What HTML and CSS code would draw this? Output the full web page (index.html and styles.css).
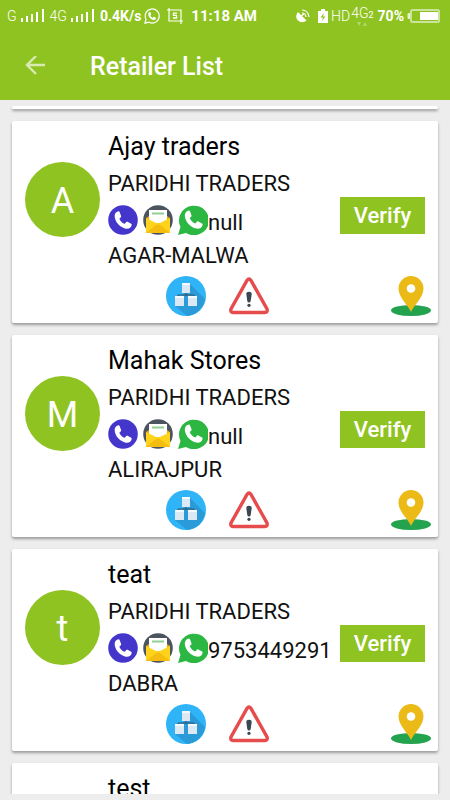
FILE: index.html
```html
<!DOCTYPE html>
<html lang="en">
<head>
  <meta charset="UTF-8">
  <meta name="viewport" content="width=device-width, initial-scale=1.0">
  <title>Retailer List</title>
  <link rel="stylesheet" href="styles.css">
</head>
<body>
  <!-- shared icons -->
  <svg class="sprite" aria-hidden="true">
    <symbol id="signal" viewBox="0 0 24 16">
      <path d="M0 10h2v4H0zM5 8h2v6H5zM10 6h2v8h-2zM15 4h2v10h-2zM21 1h2v13h-2z" fill="#fff"/>
    </symbol>
    <symbol id="handset" viewBox="0 0 24 24">
      <path d="M7 2.500c-3 .8-4.500 3-4 6.500C4 15 9 20 15 21.500c3.500.5 6-1 6.500-4 .1-.6-.1-1-.6-1.300L17 14c-.6-.3-1.100-.1-1.500.3L14 16.200C11.500 15.500 9 13 8 10.500L9.600 9c.4-.4.5-.9.3-1.400L8.300 3.300C8.100 2.700 7.600 2.400 7 2.500z"/>
    </symbol>
    <symbol id="call" viewBox="0 0 30 30">
      <circle cx="15" cy="15" r="14.800" fill="#4536cb"/>
      <use href="#handset" x="4" y="4" width="22" height="22" fill="#fff"/>
    </symbol>
    <symbol id="mail" viewBox="0 0 30 30">
      <circle cx="15" cy="15" r="14.800" fill="#4b545f"/>
      <path d="M3 13l3-2h18l3 2v8H3z" fill="#e8ac09"/>
      <path d="M6 5h18v15H6z" fill="#fff"/>
      <path d="M9 8.500h12" stroke="#8fcf91" stroke-width="2"/>
      <path d="M3 13l10 5h4l10-5v15H3z" fill="#fdd31b"/>
      <path d="M3 28l10-8q2-1 4 0l10 8z" fill="#f5bd10"/>
    </symbol>
    <symbol id="whatsapp" viewBox="0 0 30 30">
      <path d="M0 30 2.500 22A15 14.800 0 1 1 8 28z" fill="#2cb742"/>
      <use href="#handset" x="4" y="3" width="23" height="23" fill="#fff"/>
    </symbol>
    <symbol id="stock" viewBox="0 0 40 40">
      <circle cx="20" cy="20" r="20" fill="#2fb4f8"/>
      <path d="M24 8 39 23a20 20 0 0 1-18 17L9 30z" fill="#2a9bd8"/>
      <path d="M20 17v3M12 21v-2h16v2" fill="none" stroke="#345467" stroke-width="1"/>
      <path d="M16 7h8v10h-8zM9 20h9v10H9zM22 20h9v10h-9z" fill="#dce9f4"/>
      <path d="M16 7h8v2h-8zM9 20h9v2H9zM22 20h9v2h-9z" fill="#f7fafc"/>
    </symbol>
    <symbol id="warning" viewBox="0 0 40 40">
      <path d="M18 4.500q2-3 4 0l16 28.500q1 3.200-2.200 3.500H4.200Q1 36.200 2 33z" fill="#fff" stroke="#e64c4c" stroke-width="3.400"/>
      <path d="M17.300 18q0-2.200 2.700-2.200t2.700 2.200l-1 7q-.3 1.500-1.700 1.500T18.300 25z" fill="#394750"/>
      <circle cx="20" cy="29.300" r="1.600" fill="#394750"/>
    </symbol>
    <symbol id="pin" viewBox="0 0 40 40">
      <ellipse cx="20" cy="34.500" rx="20" ry="5.500" fill="#24a34f"/>
      <path d="M20 36C18 30 7.500 22 7.500 12.500a12.500 12.500 0 0 1 25 0C32.500 22 22 30 20 36z" fill="#ebba16"/>
      <circle cx="20" cy="12.500" r="4.300" fill="#fff"/>
    </symbol>
  </svg>

  <header class="app-bar">
    <div class="status">
      <span class="network">G</span>
      <svg class="signal"><use href="#signal"/></svg>
      <span class="network">4G</span>
      <svg class="signal"><use href="#signal"/></svg>
      <span class="speed">0.4K/s</span>
      <svg class="status-icon" viewBox="0 0 16 16">
        <path d="M1 15.200l1-4A7 7 0 1 1 5 14.200z" fill="none" stroke="#fff" stroke-width="1.200"/>
        <use href="#handset" x="3" y="3" width="10" height="10" fill="#fff"/>
      </svg>
      <svg class="status-icon capture" viewBox="0 0 16 16">
        <path d="M0 2h14v14M2 0v13h14" fill="none" stroke="#fff" stroke-width="1.200"/>
        <path d="M10 5.200H6.500v2.200h3v2.600H6" fill="none" stroke="#fff" stroke-width="1.300"/>
      </svg>
      <span class="clock">11:18 AM</span>
      <svg class="satellite" viewBox="0 0 14 14">
        <path d="M2 3l8.500 8.500A5.700 5.700 0 1 1 2 3z" fill="#fff"/>
        <path d="M5 7l3-2" stroke="#fff" stroke-width="1.500"/>
        <path d="M6 1q6 0 7 7M6 4q3.500 0 4 4" fill="none" stroke="#fff" stroke-width="1.200"/>
      </svg>
      <svg class="charge" viewBox="0 0 10 14">
        <path d="M0 2h3V0h4v2h3v12H0z" fill="#fff"/>
        <path d="M6 4 2.500 8.500H5L4 12l3.500-4.500H5z" fill="#8fc321"/>
      </svg>
      <span class="hd">HD</span>
      <span class="sim"><span>4G<b>2</b></span>
        <svg viewBox="0 0 10 4"><path d="M0 0h4L2 4zM6 4h4L8 0z" fill="#b4d76b"/></svg>
      </span>
      <span class="percent">70%</span>
      <svg class="battery" viewBox="0 0 33 14">
        <path d="M3 4H1.500q-1 0-1 1.500v3q0 1.500 1 1.500H3z" fill="#e6f2cd"/>
        <rect x="4" y="1" width="28" height="12" rx="1.500" fill="none" stroke="#cbe49a" stroke-width="2"/>
        <path d="M13 3h18v8H13z" fill="#fff"/>
      </svg>
    </div>
    <div class="toolbar">
      <button class="back" type="button" aria-label="Back">
        <svg viewBox="0 0 20 20"><path d="M20 9H2M11 0L2 9l9 9" fill="none" stroke="#d8ebb2" stroke-width="2.400"/></svg>
      </button>
      <h1>Retailer List</h1>
    </div>
  </header>

  <main class="list">
    <div class="card card-end"></div>

    <article class="card">
      <div class="info">
        <div class="avatar">A</div>
        <div class="details">
          <h2>Ajay traders</h2>
          <p class="shop">PARIDHI TRADERS</p>
          <div class="contact">
            <button type="button" aria-label="Call"><svg><use href="#call"/></svg></button>
            <button type="button" aria-label="Email"><svg><use href="#mail"/></svg></button>
            <button type="button" aria-label="WhatsApp"><svg><use href="#whatsapp"/></svg></button>
            <span>null</span>
          </div>
          <p class="city">AGAR-MALWA</p>
        </div>
        <button class="verify" type="button">Verify</button>
      </div>
      <div class="actions">
        <button type="button" aria-label="Stock"><svg><use href="#stock"/></svg></button>
        <button type="button" aria-label="Report"><svg><use href="#warning"/></svg></button>
        <button class="location" type="button" aria-label="Location"><svg><use href="#pin"/></svg></button>
      </div>
    </article>

    <article class="card">
      <div class="info">
        <div class="avatar">M</div>
        <div class="details">
          <h2>Mahak Stores</h2>
          <p class="shop">PARIDHI TRADERS</p>
          <div class="contact">
            <button type="button" aria-label="Call"><svg><use href="#call"/></svg></button>
            <button type="button" aria-label="Email"><svg><use href="#mail"/></svg></button>
            <button type="button" aria-label="WhatsApp"><svg><use href="#whatsapp"/></svg></button>
            <span>null</span>
          </div>
          <p class="city">ALIRAJPUR</p>
        </div>
        <button class="verify" type="button">Verify</button>
      </div>
      <div class="actions">
        <button type="button" aria-label="Stock"><svg><use href="#stock"/></svg></button>
        <button type="button" aria-label="Report"><svg><use href="#warning"/></svg></button>
        <button class="location" type="button" aria-label="Location"><svg><use href="#pin"/></svg></button>
      </div>
    </article>

    <article class="card">
      <div class="info">
        <div class="avatar">t</div>
        <div class="details">
          <h2>teat</h2>
          <p class="shop">PARIDHI TRADERS</p>
          <div class="contact">
            <button type="button" aria-label="Call"><svg><use href="#call"/></svg></button>
            <button type="button" aria-label="Email"><svg><use href="#mail"/></svg></button>
            <button type="button" aria-label="WhatsApp"><svg><use href="#whatsapp"/></svg></button>
            <span>9753449291</span>
          </div>
          <p class="city">DABRA</p>
        </div>
        <button class="verify" type="button">Verify</button>
      </div>
      <div class="actions">
        <button type="button" aria-label="Stock"><svg><use href="#stock"/></svg></button>
        <button type="button" aria-label="Report"><svg><use href="#warning"/></svg></button>
        <button class="location" type="button" aria-label="Location"><svg><use href="#pin"/></svg></button>
      </div>
    </article>

    <article class="card card-next">
      <h2>test</h2>
    </article>
  </main>
</body>
</html>
```
FILE: styles.css
```css
* {
  box-sizing: border-box;
}
body {
  margin: 0;
  height: 100vh;
  display: flex;
  flex-direction: column;
  background-color: #ededed;
  color: #111;
  font-family: Roboto, sans-serif;
}
h1, h2, p {
  margin: 0;
  font-weight: 400;
}
button {
  display: block;
  padding: 0;
  border: 0;
  background: none;
  font-family: inherit;
  cursor: pointer;
}
svg {
  display: block;
  flex: none;
}
.sprite {
  position: absolute;
  width: 0;
  height: 0;
}

/* header */
.app-bar {
  flex: none;
  background-color: #8fc321;
  color: #fff;
}
.status {
  display: flex;
  align-items: center;
  height: 32px;
  padding: 0 10px 0 7px;
  white-space: nowrap;
  line-height: 16px;
}
.network {
  font-size: 14px;
  font-weight: 300;
}
.signal {
  width: 24px;
  height: 16px;
  margin: 0 5px 0 4px;
}
.speed {
  font-size: 14px;
  font-weight: 700;
  margin-right: 3px;
}
.status-icon {
  width: 16px;
  height: 16px;
}
.capture {
  margin: 0 8px 0 7px;
}
.clock {
  font-size: 15px;
  font-weight: 700;
}
.satellite {
  width: 14px;
  height: 14px;
  margin-left: auto;
}
.charge {
  width: 10px;
  height: 14px;
  margin: 0 3px 0 8px;
}
.hd {
  font-size: 14px;
  font-weight: 300;
}
.sim {
  display: flex;
  flex-direction: column;
  align-items: center;
  margin: 0 4px 0 1px;
  font-size: 14px;
  font-weight: 300;
  line-height: 13px;
}
.sim b {
  font-size: 9px;
}
.sim svg {
  width: 10px;
  height: 4px;
}
.percent {
  font-size: 14px;
  font-weight: 700;
  margin-right: 3px;
}
.battery {
  width: 33px;
  height: 14px;
}
.toolbar {
  display: flex;
  align-items: center;
  height: 68px;
  padding-left: 25px;
}
.back {
  width: 20px;
  margin-right: 45px;
}
.back svg {
  width: 20px;
  height: 20px;
}
.toolbar h1 {
  font-size: 25px;
  font-weight: 500;
}

/* retailer cards */
.list {
  flex: 1;
  min-height: 0;
  display: flex;
  flex-direction: column;
  gap: 12px;
  margin: 6px 0;
  padding: 0 12px;
  overflow: hidden;
}
.card {
  flex: none;
  padding: 8px 0 7px;
  background-color: #fff;
  border-radius: 2px;
  box-shadow: 0 2px 3px rgba(0, 0, 0, 0.35);
}
.card-end {
  height: 3px;
  padding: 0;
}
.card-next {
  padding-left: 96px;
}
.info {
  display: flex;
  align-items: center;
  padding: 0 13px;
}
.avatar {
  flex: none;
  width: 75px;
  height: 75px;
  margin: 0 8px 6px 0;
  border-radius: 50%;
  background-color: #8fc321;
  color: #fff;
  font-size: 36px;
  line-height: 78px;
  text-align: center;
}
.details {
  flex: 1;
}
.card h2 {
  font-size: 25px;
  line-height: 36px;
  color: #000;
}
.shop {
  font-size: 22px;
  line-height: 38px;
}
.contact {
  display: flex;
  align-items: center;
  gap: 5px;
  height: 34px;
}
.contact svg {
  width: 30px;
  height: 30px;
}
.contact span {
  margin-left: -5px;
  font-size: 22px;
  line-height: 30px;
  padding-top: 5px;
}
.city {
  font-size: 22px;
  line-height: 38px;
}
.verify {
  flex: none;
  width: 85px;
  height: 37px;
  margin-top: 27px;
  background-color: #8fc321;
  color: #fff;
  font-size: 22px;
  font-weight: 500;
}
.actions {
  display: flex;
  gap: 23px;
  padding: 1px 7px 0 154px;
}
.actions svg {
  width: 40px;
  height: 40px;
}
.location {
  margin-left: auto;
}
```
